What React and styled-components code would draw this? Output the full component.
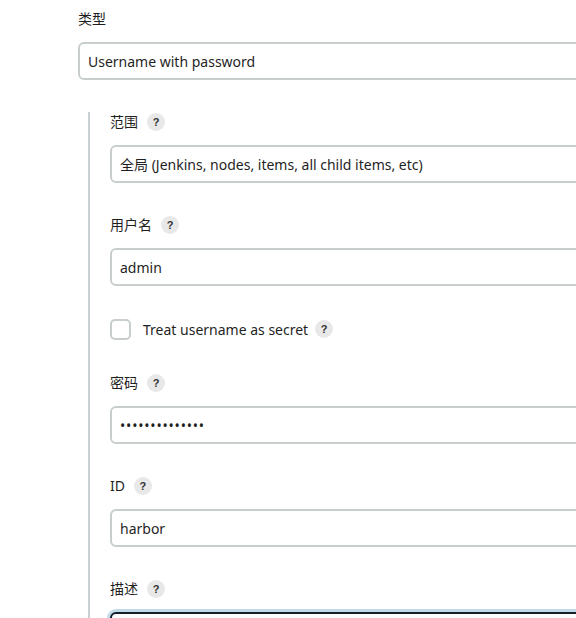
import React from "react";
import styled, { createGlobalStyle } from "styled-components";

const Global = createGlobalStyle`
  html, body { margin: 0; padding: 0; background: #fff; overflow: hidden; }
  body { font-family: "Noto Sans", "Noto Sans CJK SC", sans-serif; color: #1f1f1f; }
`;

const Page = styled.div`
  width: 720px;
  padding: 9px 0 0 78px;
  box-sizing: border-box;
`;

const Field = styled.div`
  display: flex;
  flex-direction: column;
  gap: 13px;
  margin-bottom: 32px;
`;

const LabelRow = styled.div`
  display: flex;
  align-items: center;
  gap: 9px;
  height: 20px;
  font-size: 14px;
  line-height: 20px;
`;

const Help = styled.span`
  display: inline-flex;
  align-items: center;
  justify-content: center;
  width: 18px;
  height: 18px;
  border-radius: 50%;
  background: #e8e8e8;
  color: #333;
  font-family: "Liberation Sans", sans-serif;
  font-weight: 700;
  font-size: 11px;
`;

const Input = styled.input`
  box-sizing: border-box;
  width: 100%;
  height: 38px;
  border: 2px solid ${(p) => (p.$focus ? "#14212b" : "#c8cdce")};
  border-radius: 6px;
  padding: 0 8px;
  font-family: "Noto Sans", "Noto Sans CJK SC", sans-serif;
  font-size: 14px;
  color: #1f1f1f;
  background: #fff;
  outline: none;
  box-shadow: ${(p) => (p.$focus ? "0 0 0 3px #c3dbe8" : "none")};
  letter-spacing: ${(p) => (p.type === "password" ? "0.8px" : "0")};
`;

const Nested = styled.div`
  margin-left: 10px;
  border-left: 2px solid #c9d0d1;
  padding: 0 0 0 20px;
`;

const CheckRow = styled.label`
  display: flex;
  align-items: center;
  gap: 12px;
  height: 22px;
  margin-bottom: 33px;
  font-size: 14px;
`;

const Box = styled.span`
  box-sizing: border-box;
  width: 21px;
  height: 21px;
  border: 2px solid #c8cdce;
  border-radius: 5px;
  background: #fff;
`;

const CheckText = styled.span`
  margin-right: -5px;
`;

const Label = ({ text, help = true }) => (
  <LabelRow>
    <span>{text}</span>
    {help && <Help>?</Help>}
  </LabelRow>
);

export default function App() {
  return (
    <>
      <Global />
      <Page>
        <Field>
          <Label text="类型" help={false} />
          <Input readOnly value="Username with password" />
        </Field>
        <Nested>
          <Field>
            <Label text="范围" />
            <Input readOnly value="全局 (Jenkins, nodes, items, all child items, etc)" />
          </Field>
          <Field>
            <Label text="用户名" />
            <Input readOnly value="admin" />
          </Field>
          <CheckRow>
            <Box />
            <CheckText>Treat username as secret</CheckText>
            <Help>?</Help>
          </CheckRow>
          <Field>
            <Label text="密码" />
            <Input readOnly type="password" value="harbor12345678" />
          </Field>
          <Field>
            <Label text="ID" />
            <Input readOnly value="harbor" />
          </Field>
          <Field>
            <Label text="描述" />
            <Input readOnly $focus value="" />
          </Field>
        </Nested>
      </Page>
    </>
  );
}
